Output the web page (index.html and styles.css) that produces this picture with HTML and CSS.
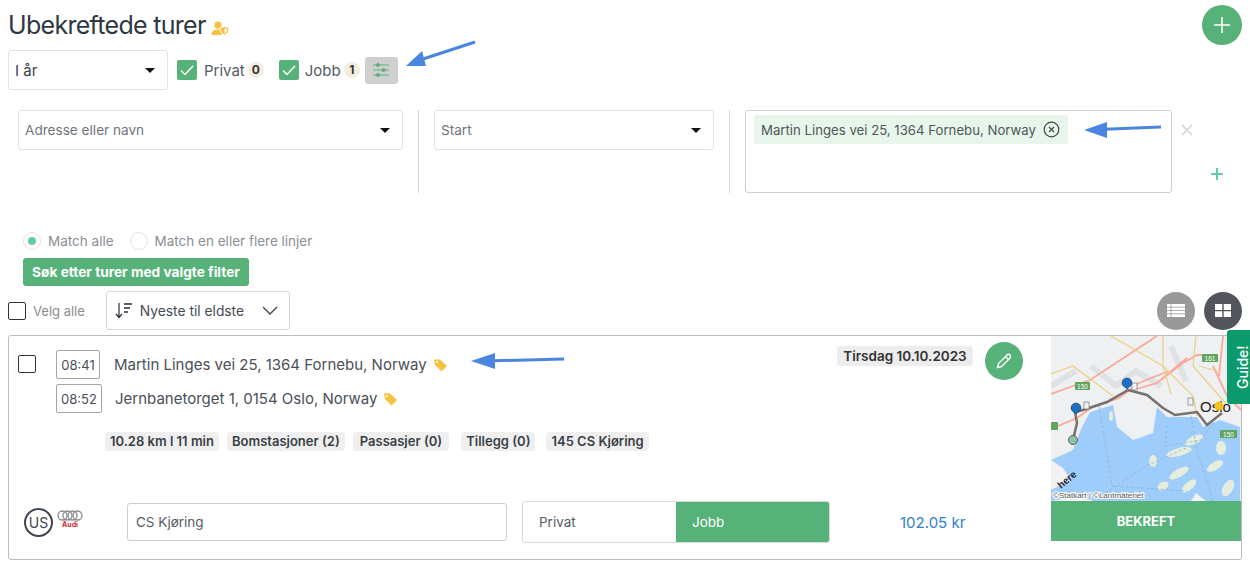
FILE: index.html
```html
<!DOCTYPE html>
<html lang="no">
<head>
<meta charset="utf-8">
<title>Ubekreftede turer</title>
<link rel="stylesheet" href="styles.css">
</head>
<body>
<div class="page">
  <header class="head">
    <h1 class="title">Ubekreftede turer</h1>
    <svg class="title-icon" width="19" height="15" viewBox="0 0 19 15"><circle cx="7" cy="4.200" r="3.600" fill="#f5c242"/><path d="M0.500 14c0-4 2.600-5.600 6.500-5.600 1.600 0 2.900.3 3.900.9v4.700z" fill="#f5c242"/><path d="M13.500 5.500l4.500 1.300c0 3.800-1.500 6-4.500 7.200-3-1.200-4.500-3.400-4.500-7.200z" fill="#f5c242" stroke="#fff" stroke-width="1"/><path d="M13.500 7.500l2.500.7c0 2-.8 3.200-2.500 4z" fill="#fff"/></svg>
    <button class="add-btn" aria-label="Legg til"><svg width="18" height="18" viewBox="0 0 18 18"><path d="M9 1v16M1 9h16" stroke="#fff" stroke-width="1.600" fill="none"/></svg></button>
  </header>

  <div class="toolbar">
    <div class="select period"><span>I år</span><i class="caret"></i></div>
    <label class="check"><span class="box"><svg width="20" height="20" viewBox="0 0 20 20"><path d="M4 10.500l4 4 8-8.500" stroke="#fff" stroke-width="1.500" fill="none"/></svg></span>Privat<b class="count">0</b></label>
    <label class="check"><span class="box"><svg width="20" height="20" viewBox="0 0 20 20"><path d="M4 10.500l4 4 8-8.500" stroke="#fff" stroke-width="1.500" fill="none"/></svg></span>Jobb<b class="count">1</b></label>
    <button class="tune" aria-label="Filter"><svg width="16" height="14" viewBox="0 0 16 14"><g stroke="#57b279" stroke-width="1" fill="#57b279"><path d="M0 2h16M0 7h16M0 12h16"/><circle cx="5" cy="2" r="1.500"/><circle cx="10.500" cy="7" r="1.500"/><circle cx="5" cy="12" r="1.500"/></g></svg></button>
  </div>

  <section class="filters">
    <div class="select addr"><span>Adresse eller navn</span><i class="caret"></i></div>
    <div class="divider"></div>
    <div class="select start"><span>Start</span><i class="caret"></i></div>
    <div class="divider second"></div>
    <div class="multi"><span class="chip">Martin Linges vei 25, 1364 Fornebu, Norway<svg width="17" height="17" viewBox="0 0 17 17"><circle cx="8.500" cy="8.500" r="7.300" fill="none" stroke="#3f4650" stroke-width="1.200"/><path d="M6 6l5 5M11 6l-5 5" stroke="#3f4650" stroke-width="1.200"/></svg></span></div>
    <div class="line-actions">
      <svg width="12" height="12" viewBox="0 0 12 12"><path d="M1 1l10 10M11 1L1 11" stroke="#dcdcdc" stroke-width="1.800"/></svg>
      <svg width="12" height="12" viewBox="0 0 12 12"><path d="M6 0v12M0 6h12" stroke="#62cfa3" stroke-width="2"/></svg>
    </div>
  </section>

  <div class="radios">
    <label class="radio"><span class="dot on"></span>Match alle</label>
    <label class="radio"><span class="dot"></span>Match en eller flere linjer</label>
  </div>
  <button class="search">Søk etter turer med valgte filter</button>

  <div class="list-bar">
    <span class="plain-box"></span><span class="all">Velg alle</span>
    <div class="sort">
      <svg width="18" height="17" viewBox="0 0 18 17"><path d="M4 1v14M1 12l3 3.500L7 12" stroke="#33293f" stroke-width="1.200" fill="none"/><path d="M9 2h8M9 6h6M9 10h4" stroke="#33293f" stroke-width="1.300"/></svg>
      <span>Nyeste til eldste</span>
      <svg class="chev" width="16" height="9" viewBox="0 0 16 9"><path d="M1 1l7 7 7-7" stroke="#4a5560" stroke-width="1.500" fill="none"/></svg>
    </div>
    <button class="view list" aria-label="Liste"><svg width="18" height="13" viewBox="0 0 18 13"><path d="M0 0h18v13H0z" fill="#fff"/><path d="M0 3.200h18M0 6.500h18M0 9.800h18M4 0v13" stroke="#999" stroke-width=".8"/></svg></button>
    <button class="view grid" aria-label="Kort"><svg width="16" height="13" viewBox="0 0 16 13"><path d="M0 0h7.300v6H0zM8.700 0H16v6H8.700zM0 7.300h7.300V13H0zM8.700 7.300H16V13H8.700z" fill="#fff"/></svg></button>
  </div>

  <article class="card">
    <div class="main">
      <div class="top">
        <span class="plain-box small"></span>
        <div class="route">
          <div class="stop"><span class="time">08:41</span><span class="place">Martin Linges vei 25, 1364 Fornebu, Norway</span><svg class="tag" width="15" height="14" viewBox="0 0 15 14"><path d="M1 1.500h6l7 6.500-5.500 5.500L2 7z" fill="#f5c242"/><circle cx="4" cy="4" r="1" fill="#fff"/></svg></div>
          <div class="stop second-stop"><span class="time wide">08:52</span><span class="place">Jernbanetorget 1, 0154 Oslo, Norway</span><svg class="tag" width="15" height="14" viewBox="0 0 15 14"><path d="M1 1.500h6l7 6.500-5.500 5.500L2 7z" fill="#f5c242"/><circle cx="4" cy="4" r="1" fill="#fff"/></svg></div>
        </div>
        <span class="date">Tirsdag 10.10.2023</span>
        <button class="edit" aria-label="Rediger"><svg width="18" height="18" viewBox="0 0 18 18"><path d="M2.500 15.500l1-4L12 3c.8-.8 2.200-.8 3 0s.8 2.200 0 3l-8.500 8.500z" fill="none" stroke="#fff" stroke-width="1.400"/><path d="M10.500 4.500l3 3" stroke="#fff" stroke-width="1.400"/></svg></button>
      </div>
      <div class="tags">
        <span>10.28 km l 11 min</span><span>Bomstasjoner (2)</span><span>Passasjer (0)</span><span>Tillegg (0)</span><span>145 CS Kjøring</span>
      </div>
      <div class="bottom">
        <span class="us">US</span>
        <span class="audi"><svg width="26" height="11" viewBox="0 0 26 11"><g fill="none" stroke="#8a8a8a" stroke-width="1.300"><circle cx="5.500" cy="5.500" r="4.500"/><circle cx="10.500" cy="5.500" r="4.500"/><circle cx="15.500" cy="5.500" r="4.500"/><circle cx="20.500" cy="5.500" r="4.500"/></g></svg><em>Audi</em></span>
        <div class="field">CS Kjøring</div>
        <div class="toggle"><span>Privat</span><span class="active">Jobb</span></div>
        <span class="price">102.05 kr</span>
      </div>
    </div>
    <div class="side">
      <svg class="map" width="190" height="165" viewBox="0 0 190 165">
        <rect width="190" height="165" fill="#eef0f2"/>
        <path d="M40 30l25 20 20-15 25 15M120 10l15 35M0 50l25-15" fill="none" stroke="#dfe1e3" stroke-width="6"/>
        <path d="M0 124l22-10 9-23 8-15 23-7 4 22 16 13 20-7 4-26 10 10 30 0 6 10 17-7 20 7v74H0z" fill="#9fcdfb"/>
        <path d="M0 124l12 8 8 12-20 10zM0 165l30-5 10 5zM140 165l5-8 10 8z" fill="#f0f2f3"/>
        <g fill="#e5eedd">
          <ellipse cx="102" cy="125" rx="4" ry="6"/>
          <ellipse cx="128" cy="116" rx="13" ry="4" transform="rotate(-15 128 116)"/>
          <ellipse cx="143" cy="104" rx="10" ry="4" transform="rotate(-25 143 104)"/>
          <ellipse cx="128" cy="137" rx="11" ry="4" transform="rotate(-30 128 137)"/>
          <ellipse cx="112" cy="150" rx="6" ry="4" transform="rotate(-30 112 150)"/>
          <ellipse cx="138" cy="150" rx="9" ry="4" transform="rotate(-40 138 150)"/>
          <ellipse cx="170" cy="112" rx="5" ry="7"/>
          <ellipse cx="164" cy="130" rx="9" ry="4" transform="rotate(-30 164 130)"/>
          <ellipse cx="177" cy="152" rx="5" ry="9" transform="rotate(30 177 152)"/>
          <ellipse cx="60" cy="80" rx="2" ry="5"/>
        </g>
        <path d="M48 70l13 80 75 5M116 90l-2 20 36-6 14-20M50 160l45-30 40-18M140 80l6 35 10 30 6 20" fill="none" stroke="#8fb0cf" stroke-width=".8" stroke-dasharray="3 2"/>
        <path d="M0 93l26-11 14-10 28-10 20-15 30-12M0 58l39-14 67-44M82 54l24-7 26-20 14-8h15M106 47l30-25M162 30l14 30 14 14M172 0l-4 40" fill="none" stroke="#f7a99a" stroke-width="1.800"/>
        <path d="M60 0l52 30 30 30 4 20M112 0v30l8 28M145 0l-3 30 35 40M0 38l22-8 40 30M148 30l22 6" fill="none" stroke="#ebd083" stroke-width="1.200"/>
        <path d="M22 104l4-17-2-11 8-2 24-8 21-12 19 5 16 13 12 7 22-3 10 13 10-8 5-4" fill="none" stroke="#77716c" stroke-width="2.500"/>
        <rect x="24" y="46" width="15" height="8" rx="1" fill="#5fa55f"/>
        <rect x="151" y="18" width="16" height="8" rx="1" fill="#5fa55f"/>
        <rect x="169" y="94" width="17" height="8" rx="1" fill="#5fa55f"/>
        <rect x="0" y="86" width="7" height="8" rx="1" fill="#5fa55f"/>
        <text class="map-shield" x="31.500" y="52.500">150</text>
        <text class="map-shield" x="159" y="24.500">161</text>
        <text class="map-shield" x="177.500" y="100.500">150</text>
        <rect x="33" y="66" width="5" height="7" fill="#f2f2f2" stroke="#666" stroke-width=".6"/>
        <rect x="81" y="47" width="5" height="7" fill="#f2f2f2" stroke="#666" stroke-width=".6"/>
        <rect x="137" y="62" width="5" height="7" fill="#f2f2f2" stroke="#666" stroke-width=".6"/>
        <path d="M20 72a5 5 0 0 1 10 0c0 3-3 4-5 6-2-2-5-3-5-6zM71 47a5 5 0 0 1 10 0c0 3-3 4-5 6-2-2-5-3-5-6z" fill="#1a6fc4" stroke="#234" stroke-width=".5"/>
        <circle cx="22" cy="104" r="4.500" fill="#8fc2a9" stroke="#444" stroke-width=".8"/>
        <text class="map-city" x="149" y="76">Oslo</text>
        <circle cx="168" cy="70" r="4.500" fill="#f5c21b"/>
        <text class="map-here" x="10" y="153" transform="rotate(-40 10 153)">here</text>
        <text class="map-copy" x="2" y="162">©Statkart | ©Lantmäteriet</text>
      </svg>
      <button class="confirm">BEKREFT</button>
    </div>
  </article>
</div>

<a class="guide">Guide!</a>
<svg class="arrow arrow-a" width="72" height="30" viewBox="0 0 72 30"><path d="M69 2L14 20" stroke="#4a86e0" stroke-width="3"/><path d="M0 26l16-15 4 15z" fill="#4a86e0"/></svg>
<svg class="arrow arrow-b" width="80" height="18" viewBox="0 0 80 18"><path d="M77 7L14 9.500" stroke="#4a86e0" stroke-width="3"/><path d="M0 10L23 2v16z" fill="#4a86e0"/></svg>
<svg class="arrow arrow-c" width="94" height="18" viewBox="0 0 94 18"><path d="M93 7L14 9" stroke="#4a86e0" stroke-width="3"/><path d="M0 9L24 1v16z" fill="#4a86e0"/></svg>
</body>
</html>
```
FILE: styles.css
```css
* { box-sizing: border-box; }
html, body { margin: 0; background: #fff; }
body { width: 1250px; height: 566px; overflow: hidden; position: relative; font-family: Inter, "Noto Sans", sans-serif; color: #4a5058; }
button { font-family: inherit; border: 0; padding: 0; cursor: pointer; }
.page { padding: 0 8px; }

.head { display: flex; align-items: center; height: 50px; }
.title { margin: 0; font-size: 25px; font-weight: 400; color: #2f3742; letter-spacing: -.7px; }
.title-icon { margin: 6px 0 0 5px; }
.add-btn { margin-left: auto; width: 40px; height: 40px; border-radius: 50%; background: #57b279; display: flex; align-items: center; justify-content: center; }

.toolbar { display: flex; align-items: center; height: 40px; }
.select { display: flex; align-items: center; justify-content: space-between; height: 40px; background: #fff; border: 1px solid #e2e2e2; border-radius: 3px; font-size: 13.600px; color: #6f747a; padding: 0 6px; }
.period { width: 160px; font-size: 15px; color: #3a3f46; margin-right: 9px; }
.caret { width: 0; height: 0; border-left: 5.500px solid transparent; border-right: 5.500px solid transparent; border-top: 5.500px solid #111; margin-right: 6px; }
.check { display: flex; align-items: center; font-size: 15px; color: #555c64; margin-right: 15px; }
.check + .check { margin-right: 5px; }
.check + .check .box { margin-right: 6px; }
.box { width: 20px; height: 20px; background: #57b279; border-radius: 2px; margin-right: 7px; display: block; }
.box svg { display: block; }
.count { font-size: 12px; font-weight: 700; background: #f5eee0; color: #333; border-radius: 8px; min-width: 16px; height: 16px; line-height: 16px; text-align: center; margin-left: 3px; }
.tune { width: 33px; height: 27px; background: #cfcfcf; border-radius: 3px; display: flex; align-items: center; justify-content: center; }

.filters { display: flex; align-items: flex-start; padding: 20px 0 0 10px; height: 122px; }
.addr { width: 385px; }
.start { width: 280px; }
.divider { width: 1px; height: 83px; background: #d8d8d8; margin: 0 15px; }
.multi { display: flex; align-items: flex-start; width: 427px; height: 83px; border: 1px solid #cfcfcf; border-radius: 3px; padding: 4px 8px; }
.chip { display: inline-flex; align-items: center; height: 29px; padding: 0 8px 0 7px; background: #e8f5ea; border-radius: 3px; font-size: 13.200px; color: #4f555c; }
.chip svg { margin-left: 7px; }
.line-actions { display: flex; flex-direction: column; align-items: flex-start; gap: 32px; padding: 14px 0 0 9px; width: 50px; }
.line-actions svg:last-child { margin-left: 30px; }

.radios { display: flex; gap: 16px; padding: 19px 0 0 15px; height: 38px; align-items: center; }
.radio { display: flex; align-items: center; font-size: 13.500px; color: #8a8f95; }
.dot { width: 18px; height: 18px; border-radius: 50%; border: 1px solid #e4e4e4; margin-right: 7px; position: relative; display: block; }
.dot.on::after { content: ""; position: absolute; inset: 4px; border-radius: 50%; background: #62cfa3; }
.search { display: block; margin: 8px 0 0 15px; width: 226px; height: 28px; background: #57b279; color: #fff; font-size: 13.700px; font-weight: 700; border-radius: 3px; white-space: nowrap; }

.list-bar { display: flex; align-items: center; height: 39px; margin-top: 5px; }
.plain-box { width: 18px; height: 18px; border: 1px solid #333; border-radius: 2px; display: block; flex: none; }
.all { font-size: 13px; color: #888d93; margin: 0 21px 0 7px; }
.sort { display: flex; align-items: center; width: 184px; height: 39px; border: 1px solid #d6d6d6; border-radius: 3px; padding: 0 11px 0 8px; font-size: 13.800px; color: #444b54; gap: 7px; white-space: nowrap; }
.chev { margin-left: auto; }
.view { width: 38px; height: 38px; border-radius: 50%; display: flex; align-items: center; justify-content: center; }
.view.list { background: #999; margin-left: auto; }
.view.grid { background: #52555c; margin-left: 9px; }

.card { display: flex; width: 1234px; height: 225px; margin-top: 5px; border: 1px solid #bcbcbc; border-radius: 3px; }
.main { flex: 1; display: flex; flex-direction: column; padding: 6px 28px 16px 9px; min-width: 0; }
.top { display: flex; align-items: flex-start; }
.plain-box.small { margin: 13px 20px 0 0; }
.route { flex: 1; padding-top: 8px; }
.stop { display: flex; align-items: center; font-size: 15px; color: #4a5058; }
.second-stop { margin-top: 5px; }
.time { width: 44px; height: 29px; border: 1px solid #a5a5a5; border-radius: 2px; font-size: 13px; display: flex; align-items: center; justify-content: center; margin-right: 14px; }
.time.wide { width: 46px; margin-right: 13px; }
.tag { margin-left: 6px; }
.date { font-size: 13.500px; font-weight: 600; background: #ededed; border-radius: 3px; height: 20px; line-height: 20px; width: 136px; text-align: center; margin: 4px 12px 0 0; color: #333; white-space: nowrap; }
.edit { width: 38px; height: 38px; border-radius: 50%; background: #57b279; display: flex; align-items: center; justify-content: center; flex: none; }
.tags { display: flex; gap: 8px; margin: 19px 0 0 87px; }
.tags span { font-size: 13px; font-weight: 600; background: #efefef; border-radius: 4px; height: 19px; line-height: 19px; padding: 0 5px; color: #3a3f46; white-space: nowrap; }
.tags span:nth-child(3) { padding: 0 7px; }
.tags span:nth-child(4) { margin-left: 4px; }
.tags span:nth-child(5) { margin-left: 3px; }
.bottom { display: flex; align-items: center; margin-top: auto; height: 42px; }
.us { width: 29px; height: 29px; border: 2px solid #3f4650; border-radius: 50%; margin-left: 6px; font-size: 14px; color: #3f4650; display: flex; align-items: center; justify-content: center; flex: none; }
.audi { display: flex; flex-direction: column; align-items: center; width: 26px; margin: 0 44px 6px 4px; flex: none; }
.audi svg { display: block; }
.audi em { font-style: normal; font-weight: 700; font-size: 7px; line-height: 8px; color: #c8262d; }
.field { width: 380px; height: 38px; border: 1px solid #cfcfcf; border-radius: 3px; font-size: 13.500px; color: #555c64; display: flex; align-items: center; padding-left: 8px; margin-right: 15px; flex: none; }
.toggle { display: flex; width: 308px; height: 42px; border: 1px solid #d8d8d8; border-radius: 3px; flex: none; overflow: hidden; }
.toggle span { width: 50%; display: flex; align-items: center; padding-left: 16px; font-size: 13.500px; color: #555c64; }
.toggle .active { background: #57b279; color: #fff; }
.price { margin-left: 70px; font-size: 15px; color: #2f80d0; white-space: nowrap; }
.side { width: 190px; flex: none; }
.map { display: block; }
.map-city { font-family: "Liberation Sans", sans-serif; font-size: 15px; fill: #222; }
.map-here { font-family: "Liberation Sans", sans-serif; font-size: 10px; font-weight: 700; fill: #223; }
.map-shield { font-family: "Liberation Sans", sans-serif; font-size: 6.500px; fill: #fff; text-anchor: middle; }
.map-copy { font-family: "Liberation Sans", sans-serif; font-size: 8px; fill: #555; stroke: #fff; stroke-width: 2px; paint-order: stroke; }
.confirm { display: block; width: 190px; height: 40px; background: #57b279; color: #fff; font-size: 13px; font-weight: 700; }

.guide { position: absolute; left: 1227px; top: 330px; width: 23px; height: 74px; padding-right: 8px; background: #0a9a6b; color: #fff; font-size: 14px; font-weight: 500; border-radius: 0 3px 3px 0; writing-mode: vertical-rl; transform: rotate(180deg); display: flex; align-items: center; justify-content: center; }
.arrow { position: absolute; }
.arrow-a { left: 406px; top: 40px; }
.arrow-b { left: 1084px; top: 120px; }
.arrow-c { left: 471px; top: 352px; }
```
